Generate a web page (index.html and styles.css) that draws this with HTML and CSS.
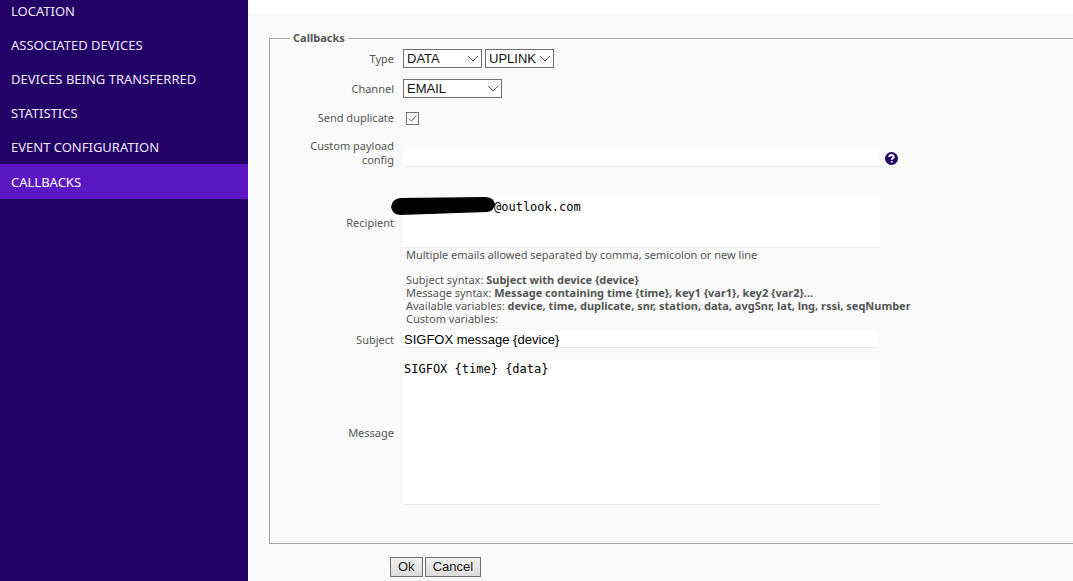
FILE: index.html
```html
<!DOCTYPE html>
<html lang="en">
<head>
<meta charset="utf-8">
<title>Callbacks</title>
<link rel="stylesheet" href="styles.css">
</head>
<body>
<div class="layout">
  <nav class="sidebar">
    <a class="nav-item" href="#location">LOCATION</a>
    <a class="nav-item" href="#associated">ASSOCIATED DEVICES</a>
    <a class="nav-item" href="#transferred">DEVICES BEING TRANSFERRED</a>
    <a class="nav-item" href="#statistics">STATISTICS</a>
    <a class="nav-item" href="#events">EVENT CONFIGURATION</a>
    <a class="nav-item active" href="#callbacks" aria-current="page">CALLBACKS</a>
  </nav>
  <main class="content">
    <form class="form">
      <fieldset class="panel">
        <legend class="legend">Callbacks</legend>
        <div class="row row-type">
          <label class="label" for="type">Type</label>
          <div class="selects">
            <span class="select-box type-box"><select class="select" id="type"><option>DATA</option></select><svg class="chevron" viewBox="0 0 12 7"><path d="M1 1l5 5 5-5"/></svg></span>
            <span class="select-box link-box"><select class="select" aria-label="Direction"><option>UPLINK</option></select><svg class="chevron" viewBox="0 0 12 7"><path d="M1 1l5 5 5-5"/></svg></span>
          </div>
        </div>
        <div class="row row-channel">
          <label class="label" for="channel">Channel</label>
          <span class="select-box channel-box"><select class="select" id="channel"><option>EMAIL</option></select><svg class="chevron" viewBox="0 0 12 7"><path d="M1 1l5 5 5-5"/></svg></span>
        </div>
        <div class="row row-duplicate">
          <label class="label" for="duplicate">Send duplicate</label>
          <span class="check-box"><input class="check" type="checkbox" id="duplicate" checked><svg class="tick" viewBox="0 0 13 13"><path d="M3 6.500l2.500 2.500 5-5.500"/></svg></span>
        </div>
        <div class="row row-payload">
          <label class="label" for="payload">Custom payload config</label>
          <div class="with-help">
            <input class="text" type="text" id="payload">
            <svg class="help" viewBox="0 0 13 13" role="img" aria-label="Help"><circle cx="6.500" cy="6.500" r="6.500"/><path d="M4.300 5.100C4.300 2.400 8.700 2.400 8.700 4.900C8.700 6.300 6.700 6.300 6.700 7.800M6.700 9v1.600"/></svg>
          </div>
        </div>
        <div class="row row-recipient">
          <label class="label" for="recipient">Recipient</label>
          <div class="recipient-box">
            <textarea class="area recipient" id="recipient">@outlook.com</textarea>
            <svg class="redaction" viewBox="0 0 104 18"><path d="M9 1L95 0Q103 1 104 7Q103 14 96 15L9 18Q1 17 0 10Q1 2 9 1Z"/></svg>
          </div>
        </div>
        <div class="row">
          <div class="notes">
            <p class="note hint">Multiple emails allowed separated by comma, semicolon or new line</p>
            <p class="note">Subject syntax: <b>Subject with device {device}</b></p>
            <p class="note">Message syntax: <b>Message containing time {time}, key1 {var1}, key2 {var2}...</b></p>
            <p class="note">Available variables: <b>device, time, duplicate, snr, station, data, avgSnr, lat, lng, rssi, seqNumber</b></p>
            <p class="note">Custom variables:</p>
          </div>
        </div>
        <div class="row row-subject">
          <label class="label" for="subject">Subject</label>
          <input class="text" type="text" id="subject" value="SIGFOX message {device}">
        </div>
        <div class="row row-message">
          <label class="label" for="message">Message</label>
          <textarea class="area message" id="message">SIGFOX {time} {data}</textarea>
        </div>
      </fieldset>
      <div class="actions">
        <button class="button" type="submit">Ok</button>
        <button class="button" type="button">Cancel</button>
      </div>
    </form>
  </main>
</div>
</body>
</html>
```
FILE: styles.css
```css
* { box-sizing: border-box; }

body {
  margin: 0;
  font-family: "Noto Sans", "Open Sans", sans-serif;
  font-size: 11px;
  line-height: 14px;
  color: #555;
  background: #fff;
}

.layout {
  display: grid;
  grid-template-columns: 248px minmax(0, 1fr);
  min-height: 100vh;
}

.sidebar {
  display: flex;
  flex-direction: column;
  background: #230066;
  overflow: hidden;
}

.nav-item {
  display: flex;
  align-items: center;
  height: 34px;
  padding-left: 11px;
  font-size: 13px;
  color: #f0e8ff;
  text-decoration: none;
}
.nav-item:first-child { margin-top: -6px; }
.nav-item.active { height: 35px; background: #5b17c4; color: #fff; }

.content {
  margin-top: 13px;
  background: #fafafa;
  overflow: hidden;
}

.form { padding: 18px 0 3px 21px; }

.panel {
  margin: 0;
  min-width: 0;
  padding: 4px 0 38px 20px;
  border: 1px solid #a5a5a5;
  border-right: 0;
}
.legend {
  padding: 0 3px;
  font-weight: bold;
  line-height: 14px;
}

.row {
  display: grid;
  grid-template-columns: 104px minmax(0, 477px);
  column-gap: 9px;
  align-items: center;
}
.label { text-align: right; }
.row-channel { margin-top: 11px; }
.row-duplicate { margin-top: 13px; }
.row-payload { margin-top: 14px; align-items: end; }
.row-recipient { margin-top: 31px; }
.row-subject { margin-top: 6px; }
.row-message { margin-top: 12px; }

.selects { display: flex; gap: 3px; }
.select-box { position: relative; display: block; }
.type-box { width: 79px; }
.link-box { width: 69px; }
.channel-box { width: 99px; }
.select {
  display: block;
  width: 100%;
  height: 19px;
  padding: 0 0 0 3px;
  border: 1px solid #707070;
  border-radius: 0;
  appearance: none;
  background: #fff;
  color: #111;
  font: 13px/17px "Liberation Sans", Arial, sans-serif;
}
.chevron {
  position: absolute;
  right: 3px;
  top: 6px;
  width: 12px;
  height: 7px;
  fill: none;
  stroke: #555;
  pointer-events: none;
}

.check-box { position: relative; width: 13px; height: 13px; margin-left: 3px; }
.check {
  display: block;
  width: 13px;
  height: 13px;
  margin: 0;
  border: 1px solid #707070;
  appearance: none;
  background: #fff;
}
.tick {
  position: absolute;
  inset: 0;
  fill: none;
  stroke: #555;
  pointer-events: none;
}

.with-help { display: flex; align-items: center; }
.with-help .text { flex: none; }
.help { flex: none; width: 13px; height: 13px; margin-left: 6px; fill: #230066; }
.help path { fill: none; stroke: #fff; stroke-width: 2; }

.text, .area {
  display: block;
  width: 100%;
  margin: 0;
  border: 0;
  border-bottom: 1px solid #eee;
  border-radius: 0;
  background: #fff;
  color: #000;
  outline: 0;
}
.text {
  width: calc(100% - 1px);
  height: 17px;
  padding: 0 1px;
  font: 13px/16px "Liberation Sans", Arial, sans-serif;
}
.area {
  padding: 2px 1px;
  resize: none;
  overflow: hidden;
  font: 12px/14px "DejaVu Sans Mono", monospace;
}
.recipient-box { position: relative; }
.recipient { height: 50px; text-indent: 90px; }
.redaction {
  position: absolute;
  left: -12px;
  top: -1px;
  width: 104px;
  height: 18px;
}
.message { height: 145px; }

.notes { grid-column: 2; padding-left: 3px; white-space: nowrap; }
.note { margin: 0; line-height: 13px; }
.hint { margin-bottom: 11px; line-height: 14px; }

.actions { display: flex; gap: 2px; margin-top: 13px; padding-left: 121px; }
.button {
  height: 20px;
  padding: 0 7px;
  border: 1px solid #707070;
  border-radius: 0;
  background: linear-gradient(#f0f0f0, #dcdcdc);
  color: #222;
  font: 13px/18px "Liberation Sans", Arial, sans-serif;
}
```
